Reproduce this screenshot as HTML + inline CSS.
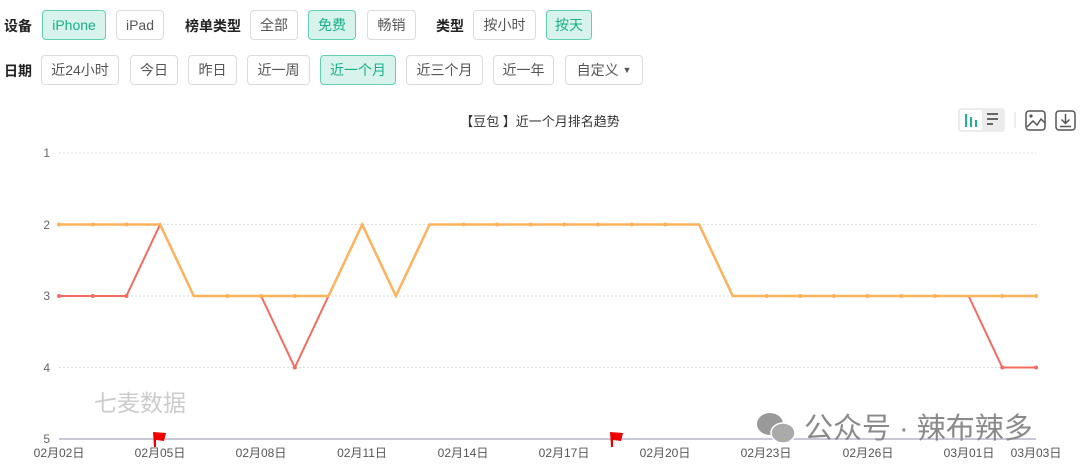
<!DOCTYPE html>
<html><head><meta charset="utf-8"><style>
*{margin:0;padding:0;box-sizing:border-box}
body{width:1080px;height:470px;background:#fff;position:relative;overflow:hidden;font-family:"Liberation Sans","Noto Sans CJK SC",sans-serif}
.l{position:absolute;font-size:14px;font-weight:bold;color:#222}
.b{position:absolute;height:30px;border:1px solid #dcdcdc;border-radius:4px;font-size:14px;color:#555;display:flex;align-items:center;justify-content:center;background:#fff}
.s{background:#d8f3ec;border-color:#62cfb2;color:#18b088}
</style></head><body>
<div class="l" style="left:4px;top:16px">设备</div>
<div class="b s" style="left:42px;top:10px;width:64px">iPhone</div>
<div class="b" style="left:116px;top:10px;width:48px">iPad</div>
<div class="l" style="left:185px;top:16px">榜单类型</div>
<div class="b" style="left:250px;top:10px;width:48px">全部</div>
<div class="b s" style="left:308px;top:10px;width:48px">免费</div>
<div class="b" style="left:367px;top:10px;width:49px">畅销</div>
<div class="l" style="left:436px;top:16px">类型</div>
<div class="b" style="left:473px;top:10px;width:63px">按小时</div>
<div class="b s" style="left:546px;top:10px;width:46px">按天</div>
<div class="l" style="left:4px;top:61px">日期</div>
<div class="b" style="left:41px;top:55px;width:78px">近24小时</div>
<div class="b" style="left:130px;top:55px;width:48px">今日</div>
<div class="b" style="left:188px;top:55px;width:49px">昨日</div>
<div class="b" style="left:247px;top:55px;width:63px">近一周</div>
<div class="b s" style="left:320px;top:55px;width:76px">近一个月</div>
<div class="b" style="left:406px;top:55px;width:77px">近三个月</div>
<div class="b" style="left:493px;top:55px;width:61px">近一年</div>
<div class="b" style="left:565px;top:55px;width:78px">自定义&nbsp;<span style="font-size:9px">▼</span></div>
<div style="position:absolute;left:0;width:1080px;top:111px;text-align:center;font-size:13px;color:#333">【豆包 】近一个月排名趋势</div>
<svg width="1080" height="470" style="position:absolute;left:0;top:0">
<rect x="958" y="108" width="47" height="24" rx="3" fill="#ececec"/>
<rect x="960" y="110" width="22" height="20" rx="2" fill="#fff"/>
<g stroke="#1fb68e" stroke-width="2"><line x1="966" y1="114" x2="966" y2="127"/><line x1="971" y1="117" x2="971" y2="127"/><line x1="976" y1="120" x2="976" y2="127"/></g>
<g stroke="#666" stroke-width="2"><line x1="987" y1="114" x2="998" y2="114"/><line x1="987" y1="119" x2="998" y2="119"/><line x1="987" y1="124" x2="993" y2="124"/></g>
<line x1="1015" y1="112" x2="1015" y2="128" stroke="#ddd"/>
<rect x="1026" y="111" width="19" height="19" rx="3" fill="none" stroke="#555" stroke-width="1.5"/>
<circle cx="1031" cy="116" r="1.6" fill="#555"/><path d="M1027 127 L1033 121 L1037 125 L1041 119 L1045 123" fill="none" stroke="#555" stroke-width="1.5"/>
<rect x="1056" y="111" width="19" height="19" rx="3" fill="none" stroke="#555" stroke-width="1.5"/>
<path d="M1065.5 114 V123 M1061.5 119.5 L1065.5 123.5 L1069.5 119.5 M1060 126.5 H1071" fill="none" stroke="#555" stroke-width="1.5"/>
<g stroke="#ddd" stroke-dasharray="2,2"><line x1="59" y1="153" x2="1036" y2="153"/><line x1="59" y1="224.5" x2="1036" y2="224.5"/><line x1="59" y1="296" x2="1036" y2="296"/><line x1="59" y1="367.5" x2="1036" y2="367.5"/></g>
<line x1="59" y1="439" x2="1036" y2="439" stroke="#b5b5c8" stroke-width="1.5"/>
<g font-size="12" fill="#666" text-anchor="end"><text x="50" y="157">1</text><text x="50" y="229">2</text><text x="50" y="300">3</text><text x="50" y="372">4</text><text x="50" y="443">5</text></g>
<g font-size="12" fill="#555" text-anchor="middle"><text x="59" y="457">02月02日</text><text x="160" y="457">02月05日</text><text x="261" y="457">02月08日</text><text x="362" y="457">02月11日</text><text x="463" y="457">02月14日</text><text x="564" y="457">02月17日</text><text x="665" y="457">02月20日</text><text x="766" y="457">02月23日</text><text x="868" y="457">02月26日</text><text x="969" y="457">03月01日</text><text x="1036" y="457">03月03日</text></g>
<polyline fill="none" stroke="#f46b5f" stroke-width="2" points="59,296 92.7,296 126.4,296 160.1,224.5 193.8,296 227.4,296 261.1,296 294.8,367.5 328.5,296 362.2,224.5 395.9,296 429.6,224.5 699.1,224.5 732.8,296 968.6,296 1002.3,367.5 1036,367.5"/>
<g fill="#f46b5f"><circle cx="59" cy="296" r="2"/><circle cx="92.7" cy="296" r="2"/><circle cx="126.4" cy="296" r="2"/><circle cx="294.8" cy="367.5" r="2"/><circle cx="1002.3" cy="367.5" r="2"/><circle cx="1036" cy="367.5" r="2"/></g>
<polyline fill="none" stroke="#ffb25c" stroke-width="2.5" points="59,224.5 160.1,224.5 193.8,296 328.5,296 362.2,224.5 395.9,296 429.6,224.5 699.1,224.5 732.8,296 1036,296"/>
<g fill="#ffb25c"><circle cx="59" cy="224.5" r="2"/><circle cx="92.7" cy="224.5" r="2"/><circle cx="126.4" cy="224.5" r="2"/><circle cx="227.4" cy="296" r="2"/><circle cx="261.1" cy="296" r="2"/><circle cx="294.8" cy="296" r="2"/><circle cx="463.3" cy="224.5" r="2"/><circle cx="497" cy="224.5" r="2"/><circle cx="530.7" cy="224.5" r="2"/><circle cx="564.3" cy="224.5" r="2"/><circle cx="598" cy="224.5" r="2"/><circle cx="631.7" cy="224.5" r="2"/><circle cx="665.4" cy="224.5" r="2"/><circle cx="766.5" cy="296" r="2"/><circle cx="800.2" cy="296" r="2"/><circle cx="833.9" cy="296" r="2"/><circle cx="867.6" cy="296" r="2"/><circle cx="901.2" cy="296" r="2"/><circle cx="934.9" cy="296" r="2"/><circle cx="1002.3" cy="296" r="2"/><circle cx="1036" cy="296" r="2"/></g>
<path d="M153 432 L166 433 L164 441 L156 440 L156 447 L154 447 Z" fill="#e00"/>
<path d="M610 432 L623 433 L621 441 L613 440 L613 447 L611 447 Z" fill="#e00"/>
<text x="94" y="411" font-size="23" fill="#ccc">七麦数据</text>
<ellipse cx="770" cy="424" rx="13" ry="11" fill="#999"/><ellipse cx="783" cy="433" rx="12" ry="10" fill="#aaa" stroke="#fff" stroke-width="1.5"/>
<text x="804" y="438" font-size="29" fill="#8a8a8a">公众号 · 辣布辣多</text>
</svg>
</body></html>
